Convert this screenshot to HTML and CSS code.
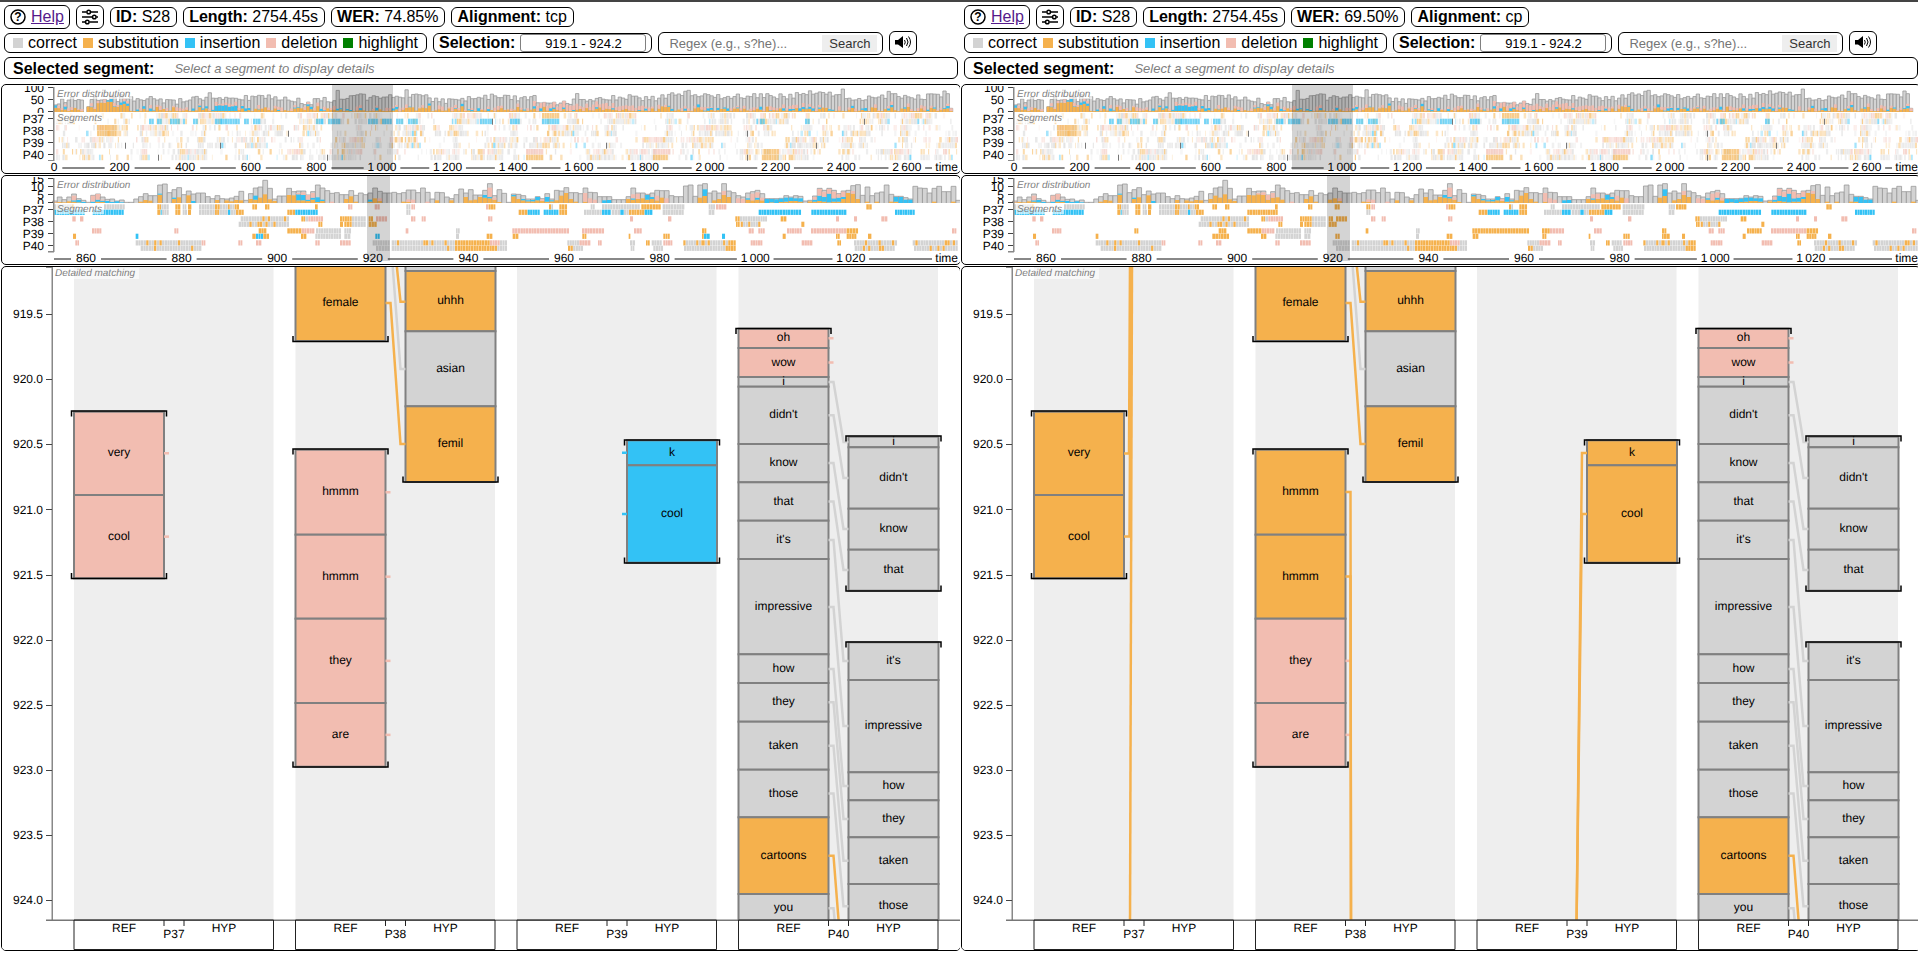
FILE: index.html
```html
<!DOCTYPE html>
<html lang="en">
<head>
  <meta charset="UTF-8">
  <title>Side-by-side</title>
  <link rel="stylesheet" href="styles.css">
</head>
<body>
  <div class="views">
    <section class="view">
      <div class="header">
        <div class="row">
          <div class="pill tall">
            <svg class="icon" viewBox="0 0 16 16"><circle cx="8" cy="8" r="7"/><text x="8" y="12">?</text></svg>
            <a href="#help">Help</a>
          </div>
          <button class="pill tall" aria-label="Settings">
            <svg class="icon" viewBox="0 0 16 16"><path d="M0 3h4.5M9 3h7M0 8h10M14.5 8H16M0 13h3M7.500 13H16"/><circle cx="6.700" cy="3" r="1.800"/><circle cx="12.300" cy="8" r="1.800"/><circle cx="5.300" cy="13" r="1.800"/></svg>
          </button>
          <div class="pill"><b>ID:</b> S28</div>
          <div class="pill"><b>Length:</b> 2754.45s</div>
          <div class="pill"><b>WER:</b> 74.85%</div>
          <div class="pill"><b>Alignment:</b> tcp</div>
        </div>
        <div class="row">
          <div class="pill legend">
            <span class="correct">correct</span><span class="substitution">substitution</span><span class="insertion">insertion</span><span class="deletion">deletion</span><span class="highlight">highlight</span>
          </div>
          <div class="pill selection"><label for="sel1"><b>Selection:</b></label><input id="sel1" type="text" value="919.1 - 924.2"></div>
          <div class="pill search"><input type="text" placeholder="Regex (e.g., s?he)..." aria-label="Regex"><button>Search</button></div>
          <button class="pill tall" aria-label="Play">
            <svg class="icon" viewBox="0 0 16 16"><path class="solid" d="M0 5h3l5-4v12L3 9.500H0z"/><path class="wave" d="M9.500 5q1.500 2 0 4.500M11.500 3q3 4 0 8M13.500 1.500q4 5.500 0 11"/></svg>
          </button>
        </div>
        <div class="pill segment"><b>Selected segment:</b><i>Select a segment to display details</i></div>
      </div>
      <div class="plot"><svg class="overview" data-view="tcp"></svg></div>
      <div class="plot"><svg class="zoomed" data-view="tcp"></svg></div>
      <div class="plot"><svg class="matching" data-view="tcp"></svg></div>
    </section>

    <section class="view">
      <div class="header">
        <div class="row">
          <div class="pill tall">
            <svg class="icon" viewBox="0 0 16 16"><circle cx="8" cy="8" r="7"/><text x="8" y="12">?</text></svg>
            <a href="#help">Help</a>
          </div>
          <button class="pill tall" aria-label="Settings">
            <svg class="icon" viewBox="0 0 16 16"><path d="M0 3h4.5M9 3h7M0 8h10M14.5 8H16M0 13h3M7.500 13H16"/><circle cx="6.700" cy="3" r="1.800"/><circle cx="12.300" cy="8" r="1.800"/><circle cx="5.300" cy="13" r="1.800"/></svg>
          </button>
          <div class="pill"><b>ID:</b> S28</div>
          <div class="pill"><b>Length:</b> 2754.45s</div>
          <div class="pill"><b>WER:</b> 69.50%</div>
          <div class="pill"><b>Alignment:</b> cp</div>
        </div>
        <div class="row">
          <div class="pill legend">
            <span class="correct">correct</span><span class="substitution">substitution</span><span class="insertion">insertion</span><span class="deletion">deletion</span><span class="highlight">highlight</span>
          </div>
          <div class="pill selection"><label for="sel2"><b>Selection:</b></label><input id="sel2" type="text" value="919.1 - 924.2"></div>
          <div class="pill search"><input type="text" placeholder="Regex (e.g., s?he)..." aria-label="Regex"><button>Search</button></div>
          <button class="pill tall" aria-label="Play">
            <svg class="icon" viewBox="0 0 16 16"><path class="solid" d="M0 5h3l5-4v12L3 9.500H0z"/><path class="wave" d="M9.500 5q1.500 2 0 4.500M11.500 3q3 4 0 8M13.500 1.500q4 5.500 0 11"/></svg>
          </button>
        </div>
        <div class="pill segment"><b>Selected segment:</b><i>Select a segment to display details</i></div>
      </div>
      <div class="plot"><svg class="overview" data-view="cp"></svg></div>
      <div class="plot"><svg class="zoomed" data-view="cp"></svg></div>
      <div class="plot"><svg class="matching" data-view="cp"></svg></div>
    </section>
  </div>
  <script src="plots.js"></script>
</body>
</html>
```

FILE: styles.css
```css
* {
  box-sizing: border-box;
}

body {
  margin: 0;
  border-top: 2px solid #444;
  background: white;
  font-family: "Liberation Sans", Arial, sans-serif;
  font-size: 16px;
  overflow: hidden;
}

.views {
  display: flex;
}

.view {
  flex: 0 0 calc(50% + 1px);
  overflow: hidden;
  background: white;
}

.header {
  display: flex;
  flex-direction: column;
  gap: 2px;
  padding: 3px 2px 5px 4px;
}

.row {
  display: flex;
  align-items: center;
  gap: 6px;
  height: 24px;
}

.pill {
  border: 1px solid black;
  border-radius: 6px;
  background: white;
  padding: 0 6px 0 5px;
  line-height: 18px;
  white-space: nowrap;
}

.tall {
  display: flex;
  align-items: center;
  gap: 5px;
  height: 24px;
  padding: 0 5px;
}

.pill a {
  color: #551a8b;
}

.icon {
  width: 16px;
  height: 16px;
  fill: none;
  stroke: black;
  stroke-width: 1.5;
}

.icon text {
  fill: black;
  stroke: none;
  font-size: 12px;
  font-weight: bold;
  text-anchor: middle;
}

.icon .solid {
  fill: black;
  stroke: none;
}

.icon .wave {
  stroke-width: 1;
}

.legend {
  display: flex;
  gap: 6px;
  padding: 0 8px;
}

.legend span {
  display: flex;
  align-items: center;
  gap: 5px;
}

.legend span::before {
  content: "";
  width: 10px;
  height: 10px;
}

.correct::before { background: lightgray; }
.substitution::before { background: #f5b14d; }
.insertion::before { background: #33c2f5; }
.deletion::before { background: #f2bdb1; }
.highlight::before { background: green; }

.selection {
  display: flex;
  align-items: center;
  gap: 5px;
  padding: 0 5px;
}

.selection input {
  width: 126px;
  height: 18px;
  border: 1px solid gray;
  border-radius: 3px;
  padding: 0;
  font: 13px "Liberation Sans", Arial, sans-serif;
  text-align: center;
}

.search {
  display: flex;
  align-items: center;
  height: 23px;
  padding: 0 5px 0 10px;
}

.search input {
  width: 153px;
  border: none;
  padding: 0;
  font: 13px "Liberation Sans", Arial, sans-serif;
}

.search button {
  width: 55px;
  height: 17px;
  border: none;
  padding: 0;
  background: #eee;
  color: #333;
  font: 13px "Liberation Sans", Arial, sans-serif;
}

.segment {
  display: flex;
  align-items: center;
  gap: 20px;
  height: 22px;
  padding: 1px 8px 0;
}

.segment i {
  color: gray;
  font-size: 13px;
}

.plot {
  width: 100%;
  margin: 0 0 1px 1px;
  border: 1px solid black;
  border-radius: 5px;
  overflow: hidden;
}

.plot svg {
  display: block;
  width: 100%;
  font-size: 12px;
  text-rendering: geometricPrecision;
}

.overview,
.zoomed {
  height: 88px;
}

.matching {
  height: 683px;
}

.end { text-anchor: end; }
.middle { text-anchor: middle; }

.title {
  font-size: 10px;
  font-style: italic;
  fill: gray;
}
```

FILE: plots.js
```js
const colors = { g: '#d3d3d3', o: '#f5b14d', b: '#33c2f5', p: '#f2bdb1' };
const speakers = ['P37', 'P38', 'P39', 'P40'];
const BASE = 958;

// bars of the zoomed plot: total, substitutions, insertions, deletions
const bars = `6 2 0 2|18 3|10 2|18 5|27 4 4 14|13 2 7|8 0 3|2|23 0 4 18|27 4 6 17|18 3 4 3|11 0 6|12 0 3|6 0 5|9 0 2|2|2|12|19 4|28 9|22 7|22|
54 25 3|57|31|40 12 4|46 17|25|36 23|27 0 6|30|30|19|13|22 9|13|12 8|15 5|20 9|35 8|8|28 12|45 10 12|48 16|68 26|44 11|12 6|21|21|
44 24|34 23|36 8 18 4|36 8 16 8|24 6 4 14|34 10 6 14|54 3 14|45 6 4|37|29 0 0 4|31|25|25 12|37 20|23 4|30|25|30 4 6|45 14|35 6 0 8|30|
30|32|28|31 4|39 3 0 8|39 0 0 10|31|45|32 0 0 4|12|32 8|31|18|13 8|25|42|30 18|40 8|24 10|24 18|38 16 8|58 14 4 28|22 10 0 6|40 3|29|2|
27 20 4|26 12|22 8 4|12 5 3|12 5 4|19 8 10|13 6 0 5|28 4 14|12 5 3|38 8|36 22|46 30|31 12|31 4|28|45 4 0 26|32 0 0 14|31 0 0 10|19|19 0 8|
19 0 9|10|10|10|19 12|45 10 4 12|30 12 0 16|30 14|26 10 14|30 12 6|38 8 0 14|37 16|37 0 0 14|22|19|19|51|54|20|54 16|58 21 20|30|36 8|
30 12|58 24 0 12|36 18|31|22 0 0 14|18 0 0 12|30 10 4|34 8 0 20|38 10 6 16|28 8 0 8|13 0 12|13 2 10|13 0 11|14 3 10|22 4 12|18 6 10|
22 6 8|20 4 10|6|8 5|21 4 6 8|44 6 16 20|38 4 14 16|44 2 26 14|38 4 10 20|28 4 12 10|36 12 6 16|38 30|52 28 0 8|55 12|23|48 4|22|30 4|
33|54|26 4|20 4 14|20 0 18|16 0 10|12 0 10|50|45|44|30|44 4|50|34|34|50 4|8`.split('|').map(s => s.trim().split(' ').map(Number));

// word strips, two rows (ref, hyp) per speaker. m = mostly correct with some substitutions
const strips = [
  '163-215g 215-222o 312-375g 472-484o 484-507g 526-542o 548-560g 564-575o 597-645g 645-660o 660-684g 684-690o 690-704g 704-718o 757-772o 795-809o 945-954o 1044-1058P 1124-1140P 1219-1232G 1234-1246p 1458-1466p 1466-1487o 1647-1654o 1654-1660g 1678-1702o 1772-1785g 1806-1920g 1924-1983o 1988-2054g 2126-2146g 2148-2180P 2599-2616o',
  '163-255b 278-372b 472-482o 482-486b 486-507g 526-542o 548-562g 564-574o 597-645g 645-658o 658-684g 684-692b 692-708g 708-732o 862-886o 886-954B 1219-1232g 1556-1583o 1583-1620b 1631-1676b 1678-1702o 1752-1806g 1806-1833b 1835-1861g 1861-1872b 1872-1887g 1887-1934o 1934-1958b 1988-2052g 2126-2144g 2276-2404b 2434-2540b 2685-2745b',
  '217-228p 240-251p 722-868m 904-916o 916-925g 925-970p 1020-1056o 1056-1098g 1106-1120o 1128-1162P 1233-1247p 1265-1278p 1464-1478p 1890-1900p 2004-2015p 2206-2220o 2220-2282m 2282-2302g 2342-2360o 2508-2518p 2562-2572p 2644-2663p',
  '716-868m 955-968o 1020-1030o 1033-1056o 1056-1098g 1106-1131o 2208-2220o 2222-2282m 2404-2414o',
  '276-305p 523-536P 776-800o 862-905o 905-944p 948-1024g 1033-1054g 1217-1226P 1368-1380g 1537-1708P 1746-1770P 1770-1813p 1902-1926p 2106-2120o 2246-2262p 2275-2295p 2361-2406P 2433-2540p 2540-2575o 2856-2870p',
  '219-229o 407-416B 757-768o 768-790B 790-808o 903-920o 946-1024g 1033-1052g 1126-1140B 1368-1378g 1460-1478o 1538-1556o 1747-1760o 1886-1892o 1990-2010o 2106-2112o 2112-2130B 2166-2176B 2348-2358o 2508-2520o 2540-2570o 2604-2615o',
  '226-238p 407-605m 605-617p 715-728p 768-785p 946-960p 1020-1053p 1118-1170g 1175-1365m 1365-1470o 1470-1500p 1500-1522g 1702-1738m 1738-1772p 1794-1806p 1890-1906g 1938-1950o 1955-1986m 1990-2018p 2050-2104m 2104-2115o 2115-2208m 2252-2288p 2405-2438p 2512-2524o 2562-2692m 2738-2874m',
  '422-605m 1128-1170g 1175-1365m 1365-1492o 1492-1522g 1704-1750m 1892-1904g 1960-1990m 2052-2208m 2564-2685m 2742-2874m'
];

const words = {
  '0ref': [['very', 144.700, 228, 'P'], ['cool', 228, 311.300, 'P']],
  '1ref': [['female', -2, 74, 'o'], ['hmmm', 182.700, 267.700, 'P'], ['hmmm', 267.700, 351.700, 'P'], ['they', 351.700, 436, 'p'], ['are', 436, 499.700, 'p']],
  '1hyp': [['', -30, 4, 'g'], ['uhhh', 4, 64.300, 'o'], ['asian', 64.300, 139.300, 'g'], ['femil', 139.300, 215, 'o']],
  '2hyp': [['k', 173.300, 198.300, 'B'], ['cool', 198.300, 295.700, 'B']],
  '3ref': [['oh', 61.700, 81, 'p'], ['wow', 81, 110, 'p'], ['i', 110, 119.700, 'g'], ["didn't", 119.700, 177, 'g'], ['know', 177, 215.300, 'g'], ['that', 215.300, 253.700, 'g'], ["it's", 253.700, 292, 'g'], ['impressive', 292, 387.300, 'g'], ['how', 387.300, 416, 'g'], ['they', 416, 454.700, 'g'], ['taken', 454.700, 502.700, 'g'], ['those', 502.700, 550.300, 'g'], ['cartoons', 550.300, 627, 'o'], ['you', 627, 655.700, 'g']],
  '3hyp': [['i', 169.700, 180.300, 'g'], ["didn't", 180.300, 241.700, 'g'], ['know', 241.700, 282.700, 'g'], ['that', 282.700, 323.700, 'g'], ["it's", 375.300, 413, 'g'], ['impressive', 413, 505.300, 'g'], ['how', 505.300, 533.300, 'g'], ['they', 533.300, 570.300, 'g'], ['taken', 570.300, 617, 'g'], ['those', 617, 661.700, 'g']]
};

// segment brackets: column, side, y, direction
const brackets = [[0, 0, 144, 1], [0, 0, 311.500, -1], [1, 0, 74.500, -1], [1, 0, 182, 1], [1, 0, 500, -1], [1, 1, 215, -1],
  [2, 1, 173, 1], [2, 1, 296, -1], [3, 0, 61.500, 1], [3, 1, 169, 1], [3, 1, 324, -1], [3, 1, 375, 1]];

// links inside a speaker column: column, ref y, hyp y, color
const links = [[1, -61, 34.700, 'o'], [1, -29, 102, 'g'], [1, 36, 177, 'o'], [3, 115, 175, 'g'], [3, 148.300, 211, 'g'], [3, 196, 262, 'g'],
  [3, 234.500, 303, 'g'], [3, 273, 394, 'g'], [3, 340, 459, 'g'], [3, 402, 519, 'g'], [3, 435.300, 552, 'g'], [3, 478.700, 593.700, 'g'], [3, 526.500, 639.300, 'g'],
  [3, 588.700, 716, 'o'], [3, 641.300, 745, 'g']];

// lowercase colors are shared, uppercase ones turn into substitutions for cp
function color(c, view) {
  if (c === 'G' || c === 'P' || c === 'B') {
    return view === 'cp' ? colors.o : colors[c.toLowerCase()];
  }
  return colors[c];
}

function random(seed) {
  return () => {
    seed = (seed * 1664525 + 1013904223) % 4294967296;
    return seed / 4294967296;
  };
}

function rect(x, y, w, h, fill, extra = '') {
  return `<rect x="${x.toFixed(2)}" y="${y.toFixed(2)}" width="${Math.max(w, 0).toFixed(2)}" height="${Math.max(h, 0).toFixed(2)}" fill="${fill}" ${extra}/>`;
}

function text(x, y, s, cls) {
  return `<text x="${x.toFixed(2)}" y="${y}" class="${cls}">${s}</text>`;
}

function stack(x, w, [total, o = 0, b = 0, p = 0]) {
  let out = rect(x, 27 - total, w, total, colors.g) + `<path d="M${x} 27V${27 - total}H${x + w}V27" fill="none" stroke="#999" stroke-width="0.8"/>`;
  let y = 27;
  for (const [h, c] of [[o, 'o'], [b, 'b'], [p, 'p']]) {
    y -= h;
    if (h) out += rect(x, y, w, h, colors[c]);
  }
  return out;
}

// axes shared by the two timeline plots
function frame(sx, ticks, labels, selection) {
  let out = `<svg y="1" height="27" width="60">`;
  labels.forEach(([v, y]) => { out += text(42, y + 3, v, 'end'); });
  out += '</svg>';
  labels.forEach(([v, y]) => { out += rect(46, y - 1, 6, 1, '#444'); });
  speakers.forEach((s, i) => {
    out += text(42, 38 + i * 12, s, 'end') + rect(46, 33 + i * 12, 6, 1, '#444');
  });
  out += rect(46, 75, 6, 1.500, '#888') + rect(51, 2, 1.500, 74, '#888');
  out += rect(52, 82, sx(BASE) - 54, 2, '#888');
  ticks.forEach(([v, x]) => {
    const w = String(v).replace('\u2009', '').length * 6.670 + 10;
    out += rect(sx(x) - w / 2, 76, w, 11, 'white') + text(sx(x), 86, v, 'middle');
  });
  out += rect(sx(BASE) - 28, 76, 28, 11, 'white') + text(sx(BASE) - 2, 86, 'time', 'end');
  out += rect(54, 3, 76, 11, 'white', 'opacity="0.6"') + text(55, 12, 'Error distribution', 'title');
  out += rect(54, 27, 48, 11, 'white', 'opacity="0.6"') + text(55, 36, 'Segments', 'title');
  out += rect(sx(selection[0]), 0, sx(selection[1]) - sx(selection[0]), 85, 'black', 'opacity="0.17"');
  return out;
}

function drawOverview(svg) {
  const sx = v => v * svg.clientWidth / BASE;
  const rnd = random(7);
  let out = '';
  for (let i = 0; i < 275; i++) {
    const x = 52 + i * 3.280;
    const wave = Math.sin(i / 3.3) * 1.5 + Math.sin(i / 7) * 1.5;
    let total = 10 + wave + rnd() * 6 + (rnd() < 0.08 ? 4 : 0) + (i > 85 ? 1 : 0) + (i > 190 ? 2.5 : 0);
    if (i < 9) total -= 3;
    if (i > 146 && i < 158) total = 7 + rnd() * 3;
    if (i < 1 || (i > 8 && i < 11) || i > 272) total = 1.5;
    let o = 0.8 + rnd() * rnd() * 6;
    if (i > 12 && i < 23) o = 4 + rnd() * 7;
    let b = rnd() < 0.3 ? 0.5 + rnd() * 2.5 : 0;
    if (i > 48 && i < 56) { b = 4 + rnd() * 2; o = 1; }
    let p = rnd() < 0.6 ? rnd() * 4 : 0;
    if (i > 145 && i < 180) p += 3;
    total = Math.max(total, Math.min(o + b + p, 20));
    if (total > 2) out += stack(sx(x), sx(3.280), [total, o, b, p]);
  }
  // dense word strips, one group of utterances per speaker at a time
  for (let row = 0; row < 8; row++) {
    const y = 28 + Math.floor(row / 2) * 12 + (row % 2) * 5.700;
    const speaker = Math.floor(row / 2);
    const hyp = row % 2 === 1;
    let x = 54;
    while (x < 955) {
      const busy = Math.sin(x / 23 + speaker * 2) + Math.sin(x / 8 + speaker) + Math.sin(x / 3.1) * 0.7 > 0.2;
      const mix = Math.sin(x / 6 + speaker * 3) * 0.25;
      const w = 0.8 + rnd() * 1.800;
      if (rnd() < (busy ? 0.88 : 0.3)) {
        const r = rnd() + mix;
        const c = r < 0.42 ? 'g' : r < 0.68 ? 'o' : hyp ? (r < 0.74 ? 'b' : 'g') : 'p';
        const alpha = (busy ? 0.25 : 0.15) + rnd() * 0.4;
        out += rect(sx(x), y, sx(w), 5.500, colors[c], `opacity="${alpha.toFixed(2)}"`);
      }
      x += w + rnd() * (busy ? 0.4 : 2);
    }
  }
  const marks = [[1, 147, 150, 'b'], [1, 155, 159, 'b'], [1, 168, 177, 'b'], [1, 191, 196, 'b'], [1, 213, 236, 'b'], [1, 242, 247, 'b'], [1, 251, 258, 'b'],
    [1, 314, 320, 'b'], [1, 326, 337, 'b'], [1, 366, 375, 'b'], [1, 380, 390, 'b'], [1, 394, 400, 'b'], [1, 406, 414, 'b'],
    [1, 478, 490, 'b'], [1, 508, 517, 'b'], [0, 540, 556, 'o'], [1, 540, 556, 'b'], [1, 758, 761, 'b'], [1, 803, 807, 'b'],
    [2, 95, 113, 'o'], [3, 95, 113, 'o'], [6, 524, 541, 'p'], [7, 524, 541, 'o'], [6, 651, 668, 'p'], [7, 651, 664, 'o'], [6, 762, 776, 'o'], [7, 762, 776, 'o']];
  marks.forEach(([row, a, b, c]) => {
    for (let x = a; x < b; x += 2.500) {
      out += rect(sx(x), 28 + Math.floor(row / 2) * 12 + (row % 2) * 5.700, sx(2.300), 5.500, colors[c], 'opacity="0.65"');
    }
  });
  [[123, 5], [156, 7], [218, 5], [286, 3], [325, 7], [490, 1], [604, 5], [745, 3], [745, 7], [862, 1], [814, 5]].forEach(([x, row]) => {
    out += rect(sx(x), 28 + Math.floor(row / 2) * 12 + 5.700, 1, 6, '#777');
  });
  const ticks = [];
  for (let t = 0; t <= 2600; t += 200) {
    ticks.push([t < 1000 ? t : `${Math.floor(t / 1000)}\u2009${String(t % 1000).padStart(3, '0')}`, 52 + t * 0.328]);
  }
  svg.innerHTML = out + frame(sx, ticks, [[100, 3], [50, 15], [0, 27]], [330, 391]);
}

function drawZoomed(svg) {
  const view = svg.dataset.view;
  const sx = v => v * svg.clientWidth / BASE;
  const rnd = random(3);
  let out = '';
  bars.forEach((bar, i) => {
    let [t, o = 0, b = 0, p = 0] = bar;
    if (view === 'cp' && i > 40 && i < 70) { o += b; b = 0; }
    out += stack(sx(50.500 + i * 4.780), sx(4.780), [t, o, b, p].map(v => v / 3));
  });
  strips.forEach((strip, row) => {
    const y = 28.300 + Math.floor(row / 2) * 12 + (row % 2) * 5.400;
    strip.split(' ').forEach(s => {
      const [, a, b, c] = s.match(/(\d+)-(\d+)(\w)/);
      const n = Math.max(1, Math.round((b - a) / 8));
      const w = (b - a) / n / 3;
      for (let i = 0; i < n; i++) {
        const fill = c === 'm' ? (rnd() < 0.2 ? colors.o : colors.g) : color(c, view);
        out += rect(sx(a / 3 - 2 + i * w), y, sx(w) - 0.300, 5.200, fill);
      }
    });
  });
  const ticks = [860, 880, 900, 920, 940, 960, 980, '1\u2009000', '1\u2009020'].map((t, i) => [t, 84 + i * 95.600]);
  svg.innerHTML = out + frame(sx, ticks, [[15, 3], [10, 11], [5, 19], [0, 27]], [365, 388]);
}

function drawMatching(svg) {
  const view = svg.dataset.view;
  const sx = v => v * svg.clientWidth / BASE;
  const col = i => 72 + i * 221.500;
  let out = '';
  let marks = '';
  const line = (pts, c) => `<polyline points="${pts.map(([x, y]) => `${sx(x).toFixed(2)},${y}`).join(' ')}" fill="none" stroke="${colors[c]}" stroke-width="2.500"/>`;

  speakers.forEach((s, i) => { out += rect(sx(col(i)), 0, sx(199.500), 653, '#eee'); });
  for (const key in words) {
    const i = Number(key[0]);
    const hyp = key.endsWith('hyp');
    const x = col(i) + (hyp ? 110 : 0);
    words[key].forEach(([w, a, b, c]) => {
      out += rect(sx(x), a, sx(90), b - a, color(c, view), 'stroke="gray" stroke-width="2"');
      out += text(sx(x + 45), Math.floor((a + b) / 2 + 3.500), w, 'middle');
      const mid = (a + b) / 2;
      if (color(c, view) === colors.p) marks += line([[x + 90, mid], [x + 95, mid]], 'p');
      if (color(c, view) === colors.b) marks += line([[x - 5, mid], [x, mid]], 'b');
    });
  }
  out += marks;
  links.forEach(([i, a, b, c]) => {
    out += line([[col(i) + 90, a], [col(i) + 95, a], [col(i) + 105, b], [col(i) + 110, b]], c);
  });
  if (view === 'cp') {
    out += line([[162, 186.500], [167, 186.500], [168, -5]], 'o') + line([[162, 269.500], [167.500, 269.500], [169, -5]], 'o');
    out += line([[170, -5], [168, 660]], 'o');
    out += line([[col(1) + 90, 225], [col(1) + 95, 225], [col(1) + 95.500, 660]], 'o') + line([[col(1) + 90, 309.500], [col(1) + 95, 309.500], [col(1) + 95.500, 660]], 'o');
    out += line([[col(2) + 110, 186], [col(2) + 105, 186], [col(2) + 99.500, 660]], 'o') + line([[col(2) + 110, 247], [col(2) + 105, 247], [col(2) + 99.500, 660]], 'o');
  }
  brackets.forEach(([i, side, y, dir]) => {
    const x = col(i) + side * 110;
    out += `<path d="M${sx(x - 2.500)} ${y + dir * 5.500}V${y}H${sx(x + 92.500)}V${y + dir * 5.500}" fill="none" stroke="black" stroke-width="1.500"/>`;
  });

  // axes
  out += rect(0, 653, sx(BASE), 30, 'white');
  out += rect(49.500, 0, 1.500, 653, '#888') + rect(44, 0, 6, 1, '#888');
  for (let i = 0; i < 10; i++) {
    const y = 47 + i * 65.150;
    out += rect(44, Math.round(y), 6, 1, '#444') + text(41, (y + 4).toFixed(1), (919.5 + i * 0.5).toFixed(1), 'end');
  }
  out += rect(44, 652.500, sx(BASE) - 44, 1.500, '#777');
  speakers.forEach((s, i) => {
    const x = col(i);
    out += `<path d="M${sx(x)} 653V682.500H${sx(x + 199.500)}V653ZM${sx(x + 90)} 653v6M${sx(x + 110)} 653v6" fill="none" stroke="#222"/>`;
    out += text(sx(x + 50), 665, 'REF', 'middle') + text(sx(x + 100), 671, s, 'middle') + text(sx(x + 150), 665, 'HYP', 'middle');
  });
  out += rect(52, 1, 85, 11, 'white', 'opacity="0.6"') + text(53, 9, 'Detailed matching', 'title');
  svg.innerHTML = out;
}

function draw() {
  document.querySelectorAll('.overview').forEach(drawOverview);
  document.querySelectorAll('.zoomed').forEach(drawZoomed);
  document.querySelectorAll('.matching').forEach(drawMatching);
}

draw();
window.onresize = draw;
```
